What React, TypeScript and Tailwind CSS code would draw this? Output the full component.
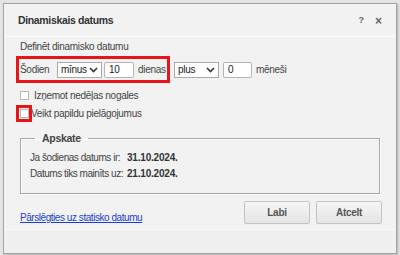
import React from "react";

const font = { fontFamily: '"Liberation Sans", Arial, sans-serif' };

function Chevron() {
  return (
    <svg width="9" height="6" viewBox="0 0 9 6" className="shrink-0">
      <path d="M1 1 L4.5 4.5 L8 1" fill="none" stroke="#333" strokeWidth="1.6" />
    </svg>
  );
}

function FakeSelect({ value, width }: { value: string; width: string }) {
  return (
    <div className={`flex h-[16px] ${width} items-center justify-between border border-[#a9a9a9] bg-white pl-[3px] pr-[3px] text-[#222]`}>
      <span>{value}</span>
      <Chevron />
    </div>
  );
}

function FakeInput({ value, width }: { value: string; width: string }) {
  return (
    <div className={`flex h-[16px] ${width} items-center rounded-[2px] border border-[#b4b4b4] bg-white pl-[4px] text-[#222]`}>
      {value}
    </div>
  );
}

function Checkbox() {
  return <div className="h-[9px] w-[9px] shrink-0 border border-[#b8b8b8] bg-white" />;
}

export default function App() {
  return (
    <div className="h-[255px] w-[400px] overflow-hidden bg-[#e4e4e4] pl-[3px] pt-[3px]" style={font}>
      <div className="flex h-[251px] w-[394px] flex-col border border-[#a4a4a4] bg-[#f2f2f2] shadow-[1px_1px_2px_rgba(0,0,0,0.25)]">
        <div className="flex h-[33px] shrink-0 items-center justify-between border-b border-[#fbfbfb] pl-[14px] pr-[14px] pt-[2px]">
          <span className="text-[10.5px] font-bold tracking-[-0.35px] text-[#333]">Dinamiskais datums</span>
          <div className="flex items-center gap-[11px] text-[9px] font-bold text-[#666]">
            <span>?</span>
            <span className="text-[12px]">×</span>
          </div>
        </div>

        <div className="flex flex-col whitespace-nowrap pl-[12px] text-[10px] tracking-[-0.3px] text-[#444]">
          <div className="flex h-[15px] items-center pl-[4px] pt-[3px]">Definēt dinamisko datumu</div>

          <div className="mt-[4px] flex items-center gap-[4px]">
            <div className="flex h-[27px] w-[154px] items-center border-[3px] border-[#e8141a] pl-[1px]">
              <span className="w-[37px]">Šodien</span>
              <FakeSelect value="mīnus" width="w-[45px]" />
              <div className="w-[2px] shrink-0" />
              <FakeInput value="10" width="w-[30px]" />
              <span className="ml-[4px]">dienas</span>
            </div>
            <FakeSelect value="plus" width="w-[45px]" />
            <FakeInput value="0" width="w-[29px]" />
            <span>mēneši</span>
          </div>

          <div className="mt-[6px] flex h-[13px] items-center gap-[5px] pl-[4px]">
            <Checkbox />
            <span>Izņemot nedēļas nogales</span>
          </div>

          <div className="mt-[3px] flex items-center">
            <div className="flex h-[17px] w-[16px] items-center justify-center border-[3px] border-[#e8141a]">
              <Checkbox />
            </div>
            <span className="-ml-[1px]">Veikt papildu pielāgojumus</span>
          </div>

          <fieldset className="mt-[9px] ml-[4px] h-[63px] w-[360px] border border-[#a8a8a8] pl-[9px] shadow-[inset_1px_1px_0_#fff,1px_1px_0_#fff]">
            <legend className="ml-[5px] px-[7px] text-[10.5px] leading-[14px] font-bold text-[#444]">Apskate</legend>
            <div className="mt-[6px] grid grid-cols-[97px_1fr] gap-y-[2px] leading-[14px] tracking-[-0.45px]">
              <span>Ja šodienas datums ir:</span>
              <span className="font-bold tracking-[-0.2px] text-[#333]">31.10.2024.</span>
              <span>Datums tiks mainīts uz:</span>
              <span className="font-bold tracking-[-0.2px] text-[#333]">21.10.2024.</span>
            </div>
          </fieldset>

          <div className="mt-[7px] flex items-start justify-between pr-[14px]">
            <a href="#" className="mt-[9px] pl-[4px] tracking-[-0.45px] text-[#1a3fd0] underline">
              Pārslēgties uz statisko datumu
            </a>
            <div className="flex gap-[6px]">
              <button className="h-[23px] w-[66px] rounded-[2px] border border-[#c4c4c4] bg-gradient-to-b from-[#f6f6f6] to-[#e4e4e4] font-bold text-[#555]">
                Labi
              </button>
              <button className="h-[23px] w-[66px] rounded-[2px] border border-[#c4c4c4] bg-gradient-to-b from-[#f6f6f6] to-[#e4e4e4] font-bold text-[#555]">
                Atcelt
              </button>
            </div>
          </div>
        </div>

        <div className="mt-[4px] flex-1 border-t border-[#fafafa] bg-[#f0f0f0]" />
      </div>
    </div>
  );
}
